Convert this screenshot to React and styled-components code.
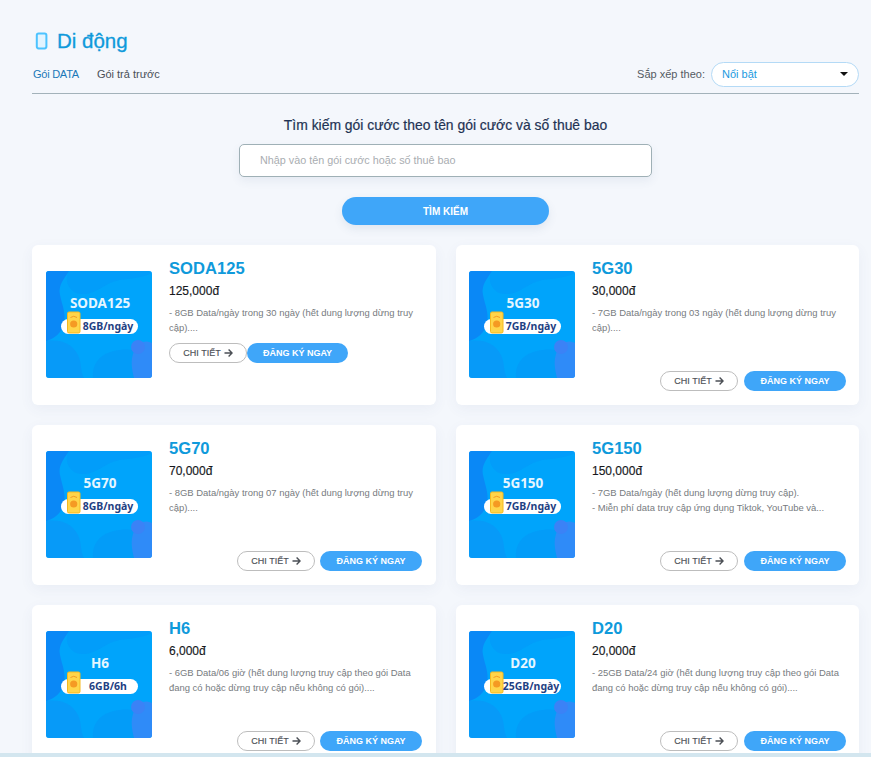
import React from "react";
import styled, { createGlobalStyle } from "styled-components";

const Global = createGlobalStyle`
  html, body { margin: 0; padding: 0; height: 100%; overflow: hidden; background: #f4f7fc; }
  body { font-family: "Liberation Sans", Arial, sans-serif; }
  * { box-sizing: border-box; }
`;

const Page = styled.div`
  height: 757px;
  overflow: hidden;
  padding: 29px 12px 0 32px;
`;
const Title = styled.h1`
  display: flex;
  align-items: center;
  gap: 9px;
  margin: 0 0 0 2px;
  height: 24px;
  font-size: 20.5px;
  font-weight: 500;
  line-height: 24px;
  color: #0f9adb;
  -webkit-text-stroke: 0.3px #0f9adb;
`;
const TabBar = styled.div`
  display: flex;
  align-items: center;
  justify-content: space-between;
  height: 33px;
  margin-top: 8px;
  padding-bottom: 7px;
  border-bottom: 1px solid #a3b2ba;
`;
const Tabs = styled.div`
  display: flex;
  gap: 18px;
  padding-left: 1px;
`;
const Tab = styled.span`
  font-size: 11px;
  letter-spacing: ${(p) => (p.$active ? "-0.25px" : "0")};
  color: ${(p) => (p.$active ? "#1a78b8" : "#4a4f57")};
`;
const Sort = styled.div`
  display: flex;
  align-items: center;
  gap: 6px;
  margin-top: 1px;
`;
const SortLabel = styled.span`
  font-size: 11px;
  color: #555b63;
`;
const Select = styled.div`
  position: relative;
  width: 148px;
  height: 25px;
  padding-left: 10px;
  border: 1px solid #b4daf6;
  border-radius: 13px;
  background: #fff;
  font-size: 11px;
  line-height: 23px;
  color: #1b9ae0;
`;
const Caret = styled.i`
  position: absolute;
  right: 10px;
  top: 9px;
  border-left: 4px solid transparent;
  border-right: 4px solid transparent;
  border-top: 4px solid #111;
`;
const Search = styled.section`
  display: flex;
  flex-direction: column;
  align-items: center;
  margin-top: 22px;
  margin-bottom: 20px;
`;
const SearchTitle = styled.h2`
  margin: 0;
  font-size: 13.9px;
  font-weight: 500;
  line-height: 18px;
  color: #1f3354;
  -webkit-text-stroke: 0.2px #1f3354;
`;
const SearchInput = styled.div`
  width: 413px;
  height: 33px;
  margin-top: 10px;
  padding-left: 20px;
  border: 1px solid #9fb0b6;
  border-radius: 5px;
  background: #fff;
  box-shadow: 0 4px 10px rgba(60, 90, 130, 0.08);
  font-size: 10.8px;
  line-height: 31px;
  color: #a9adb1;
`;
const SearchButton = styled.button`
  width: 207px;
  height: 28px;
  margin-top: 20px;
  border: 0;
  border-radius: 14px;
  background: #3fa6f9;
  box-shadow: 0 4px 10px rgba(60, 90, 130, 0.1);
  color: #fff;
  font: bold 10px "Liberation Sans", Arial, sans-serif;
`;
const Grid = styled.div`
  display: grid;
  grid-template-columns: 404px 403px;
  grid-auto-rows: 160px;
  gap: 20px;
`;
const Card = styled.article`
  display: flex;
  align-items: center;
  gap: 17px;
  padding: 0 13px 1px;
  border-radius: 6px;
  background: #fff;
  box-shadow: 0 4px 14px rgba(60, 90, 130, 0.06);
  &:nth-child(odd) {
    padding: 0 14px 1px;
  }
`;
const Body = styled.div`
  flex: 1;
  align-self: stretch;
  display: flex;
  flex-direction: column;
  padding: 14px 0 13px;
  min-width: 0;
`;
const Name = styled.h3`
  margin: 0;
  font-size: 16.6px;
  font-weight: bold;
  line-height: 20px;
  color: #0f9adb;
`;
const Price = styled.div`
  margin-top: 5px;
  font-size: 12px;
  font-weight: 500;
  line-height: 14px;
  color: #16181c;
  -webkit-text-stroke: 0.15px #16181c;
`;
const Desc = styled.p`
  margin: 7px 0 0;
  font-size: 9.45px;
  line-height: 15px;
  color: #777b80;
`;
const Actions = styled.div`
  display: flex;
  gap: ${(p) => (p.$inline ? "0" : p.$tight ? "5px" : "6px")};
  justify-content: ${(p) => (p.$inline ? "flex-start" : "flex-end")};
  margin-top: ${(p) => (p.$inline ? "8px" : "auto")};
`;
const Detail = styled.button`
  display: flex;
  align-items: center;
  justify-content: center;
  gap: 3px;
  width: 78px;
  height: 20px;
  padding: 0;
  border: 1px solid #bdbdbd;
  border-radius: 10px;
  background: #fff;
  color: #4b4f55;
  font: 500 9px "Liberation Sans", Arial, sans-serif;
  -webkit-text-stroke: 0.15px #4b4f55;
`;
const Register = styled.button`
  width: ${(p) => (p.$inline ? "101px" : "102px")};
  height: 20px;
  padding: 0;
  border: 0;
  border-radius: 10px;
  background: #3fa6f9;
  color: #fff;
  font: bold 9px "Liberation Sans", Arial, sans-serif;
`;
const Strip = styled.div`
  position: fixed;
  left: 0;
  right: 0;
  bottom: 0;
  height: 4px;
  background: #d3e6ef;
`;
const Thumb = styled.svg`
  display: block;
  flex: none;
  width: 106px;
  height: 107px;
`;
const ThumbName = styled.text`
  font: bold 13.5px "Noto Sans", "Liberation Sans", sans-serif;
  fill: #e6f6ff;
  text-anchor: middle;
`;
const ThumbQuota = styled.text`
  font: bold 10.5px "Noto Sans", "Liberation Sans", sans-serif;
  fill: #1f3f83;
  text-anchor: middle;
`;

const PhoneIcon = () => (
  <svg width="14" height="18" viewBox="0 0 14 18" fill="none" aria-hidden="true">
    <rect x="2.8" y="1.4" width="9.6" height="15" rx="1.8" fill="#e2f4ff" stroke="#4dc3ff" strokeWidth="2" />
  </svg>
);

const ArrowIcon = () => (
  <svg width="9" height="8" viewBox="0 0 9 8" fill="none" aria-hidden="true">
    <path d="M0.5 4H8M4.6 0.6L8 4L4.6 7.4" stroke="#4b4f55" strokeWidth="1.4" />
  </svg>
);

function PlanImage({ id, name, quota }) {
  return (
    <Thumb viewBox="0 0 106 107">
      <defs>
        <clipPath id={id}>
          <rect width="106" height="107" rx="3" />
        </clipPath>
      </defs>
      <g clipPath={`url(#${id})`}>
        <rect width="106" height="107" fill="#00a4fb" />
        <path d="M0 0H23C18 8 12 14 14 24C16 34 20 42 18 52C16 62 8 68 0 70Z" fill="#0a88f6" />
        <path d="M23 0H106V2C90 10 76 6 64 12C52 18 44 26 30 22C22 18 18 8 23 0Z" fill="#0396f9" opacity="0.5" />
        <path d="M0 70C14 68 26 72 32 84C36 92 34 100 38 107H0Z" fill="#0a95f7" opacity="0.7" />
        <path d="M47 107C46 94 52 84 68 80C76 78 84 78 90 80V107Z" fill="#049af8" opacity="0.8" />
        <path d="M88 80C84 90 86 98 88 107H106V72C98 68 92 72 88 80Z" fill="#2f8bf8" />
        <circle cx="92" cy="76" r="7" fill="#3b82f6" />
        <ThumbName x="54" y="37">{name}</ThumbName>
        <rect x="15" y="48" width="77" height="15" rx="7.5" fill="#fff" />
        <rect x="21.5" y="41" width="12.5" height="21" rx="1.5" fill="#ffd54a" stroke="#f5b81f" strokeWidth="1" />
        <circle cx="27.7" cy="53" r="3.6" fill="#f59a23" />
        <path d="M24.5 46.5Q27.7 44 31 46.5" stroke="#f59a23" strokeWidth="1" fill="none" />
        <ThumbQuota x="62" y="59">{quota}</ThumbQuota>
      </g>
    </Thumb>
  );
}

const plans = [
  { name: "SODA125", price: "125,000đ", quota: "8GB/ngày", inline: true, desc: ["- 8GB Data/ngày trong 30 ngày (hết dung lượng dừng truy cập)...."] },
  { name: "5G30", price: "30,000đ", quota: "7GB/ngày", desc: ["- 7GB Data/ngày trong 03 ngày (hết dung lượng dừng truy cập)...."] },
  { name: "5G70", price: "70,000đ", quota: "8GB/ngày", desc: ["- 8GB Data/ngày trong 07 ngày (hết dung lượng dừng truy cập)...."] },
  { name: "5G150", price: "150,000đ", quota: "7GB/ngày", desc: ["- 7GB Data/ngày (hết dung lượng dừng truy cập).", "- Miễn phí data truy cập ứng dụng Tiktok, YouTube và..."] },
  { name: "H6", price: "6,000đ", quota: "6GB/6h", desc: ["- 6GB Data/06 giờ (hết dung lượng truy cập theo gói Data đang có hoặc dừng truy cập nếu không có gói)...."] },
  { name: "D20", price: "20,000đ", quota: "25GB/ngày", desc: ["- 25GB Data/24 giờ (hết dung lượng truy cập theo gói Data đang có hoặc dừng truy cập nếu không có gói)...."] },
];

export default function App() {
  return (
    <>
      <Global />
      <Page>
        <Title>
          <PhoneIcon />
          Di động
        </Title>
        <TabBar>
          <Tabs>
            <Tab $active>Gói DATA</Tab>
            <Tab>Gói trả trước</Tab>
          </Tabs>
          <Sort>
            <SortLabel>Sắp xếp theo:</SortLabel>
            <Select>
              Nổi bật
              <Caret />
            </Select>
          </Sort>
        </TabBar>
        <Search>
          <SearchTitle>Tìm kiếm gói cước theo tên gói cước và số thuê bao</SearchTitle>
          <SearchInput>Nhập vào tên gói cước hoặc số thuê bao</SearchInput>
          <SearchButton>TÌM KIẾM</SearchButton>
        </Search>
        <Grid>
          {plans.map((p, i) => (
            <Card key={p.name}>
              <PlanImage id={`clip-${p.name}`} name={p.name} quota={p.quota} />
              <Body>
                <Name>{p.name}</Name>
                <Price>{p.price}</Price>
                <Desc>
                  {p.desc.map((line, j) => (
                    <React.Fragment key={j}>
                      {j > 0 && <br />}
                      {line}
                    </React.Fragment>
                  ))}
                </Desc>
                <Actions $inline={p.inline} $tight={i % 2 === 0}>
                  <Detail>
                    CHI TIẾT <ArrowIcon />
                  </Detail>
                  <Register $inline={p.inline}>ĐĂNG KÝ NGAY</Register>
                </Actions>
              </Body>
            </Card>
          ))}
        </Grid>
      </Page>
      <Strip />
    </>
  );
}
